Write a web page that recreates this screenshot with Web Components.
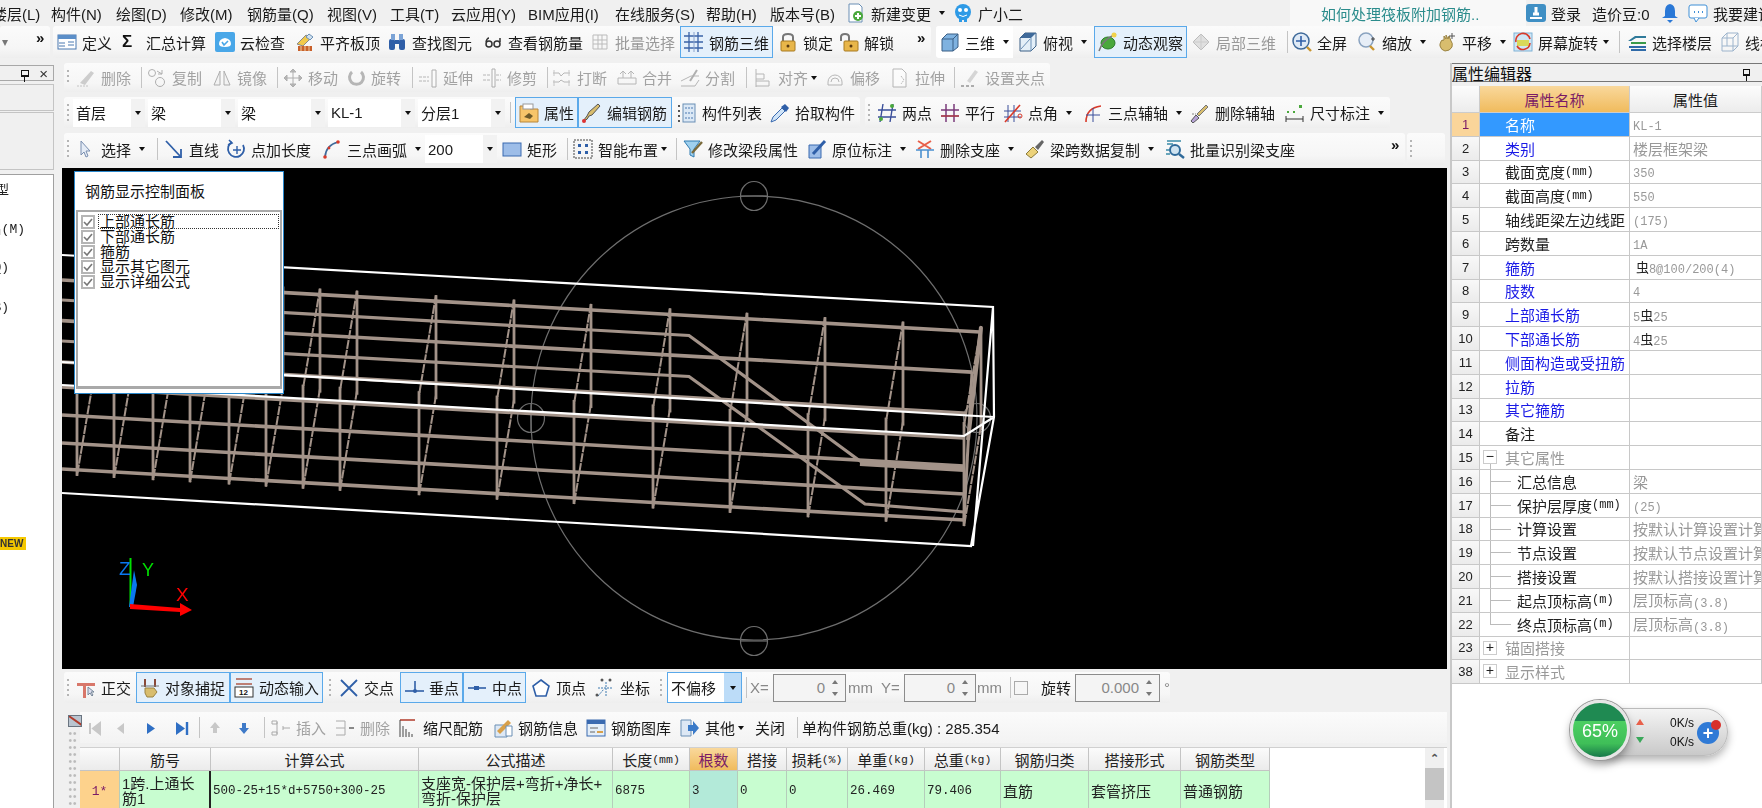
<!DOCTYPE html>
<html lang="zh">
<head>
<meta charset="utf-8">
<title>钢筋三维</title>
<style>
html,body{margin:0;height:100%;overflow:hidden;background:#f0f0f0}
body{font:15px "Liberation Sans","Noto Sans CJK SC",sans-serif;color:#1a1a1a}
small{font:12px "Liberation Mono","Noto Sans CJK SC",monospace;vertical-align:-1px}
b.sym{font:13px "Noto Sans CJK SC",sans-serif;color:#222}
</style>
</head>
<body>
<gl-app>
  <gl-bar slot="menu" flat>
    <g-tool w="59" style="margin-left:-8px">楼层(L)</g-tool><g-tool w="65">构件(N)</g-tool><g-tool w="64">绘图(D)</g-tool><g-tool w="67">修改(M)</g-tool><g-tool w="80">钢筋量(Q)</g-tool><g-tool w="63">视图(V)</g-tool><g-tool w="61">工具(T)</g-tool><g-tool w="77">云应用(Y)</g-tool><g-tool w="87">BIM应用(I)</g-tool><g-tool w="91">在线服务(S)</g-tool><g-tool w="64">帮助(H)</g-tool><g-tool w="76">版本号(B)</g-tool>
    <g-tool i="newdoc" w="107" caret>新建变更</g-tool><g-tool i="robot" w="337">广小二</g-tool>
    <g-tool w="236" pad="31" style="background:#f8f8f8;color:#2b8c8c">如何处理筏板附加钢筋..</g-tool>
    <g-tool i="login" w="66">登录</g-tool><g-tool w="68">造价豆:0</g-tool><g-tool i="bell" w="28"></g-tool><g-tool i="chat" w="80">我要建议</g-tool>
  </gl-bar>

  <gl-bar slot="main" flat>
    <gl-bar w="50"><g-glyph w="36">▾</g-glyph><g-more w="14"></g-more></gl-bar>
    <gl-bar w="878" pad="4" style="margin-left:3px">
      <g-tool i="define" w="64">定义</g-tool><g-tool i="sigma" w="94">汇总计算</g-tool><g-tool i="cloud" w="80">云检查</g-tool><g-tool i="flush" w="92">平齐板顶</g-tool><g-tool i="find" w="96">查找图元</g-tool><g-tool i="glasses" w="107">查看钢筋量</g-tool><g-tool i="batch" w="90" style="color:#999">批量选择</g-tool><g-tool i="bar3d" w="93" on>钢筋三维</g-tool><g-tool i="lock" w="61" style="margin-left:5px">锁定</g-tool><g-tool i="unlock" w="60">解锁</g-tool><g-more w="14" style="margin-left:auto"></g-more>
    </gl-bar>
    <gl-bar w="826" style="margin-left:5px">
      <g-tool i="cube" w="77" pad="4" caret style="background:#fff">三维</g-tool><g-tool i="top" w="81" pad="5" caret>俯视</g-tool><g-tool i="orbit" w="93" on>动态观察</g-tool><g-tool i="local" w="91" pad="0" style="color:#999;margin-left:4px">局部三维</g-tool><g-sep w="10"></g-sep>
      <g-tool i="full" w="65">全屏</g-tool><g-tool i="zoom" w="80" caret>缩放</g-tool><g-tool i="hand" w="76" caret>平移</g-tool><g-tool i="spin" w="99" caret="5">屏幕旋转</g-tool><g-sep w="15"></g-sep><g-tool i="floors" w="93">选择楼层</g-tool><g-tool i="wire" w="60">线框</g-tool>
    </gl-bar>
  </gl-bar>

  <gl-dock slot="left"></gl-dock>

  <gl-bar slot="center" w="986" h="29" style="margin-left:2px;color:#a2a2a2;--icon:grayscale(1) opacity(.45)">
    <g-grip w="12"></g-grip>
    <g-tool i="erase" w="60">删除</g-tool><g-sep w="11"></g-sep><g-tool i="copy" w="65">复制</g-tool><g-tool i="mirror" w="59">镜像</g-tool><g-sep w="12"></g-sep><g-tool i="move" w="63">移动</g-tool><g-tool i="rot" w="60">旋转</g-tool><g-sep w="12"></g-sep><g-tool i="extend" w="64">延伸</g-tool><g-tool i="trim" w="60">修剪</g-tool><g-sep w="10"></g-sep><g-tool i="brk" w="65">打断</g-tool><g-tool i="merge" w="63">合并</g-tool><g-tool i="split" w="60">分割</g-tool><g-sep w="13"></g-sep><g-tool i="align" w="72" caret="3">对齐</g-tool><g-tool i="offset" w="65">偏移</g-tool><g-tool i="stretch" w="58">拉伸</g-tool><g-sep w="12"></g-sep><g-tool i="gripset" w="90">设置夹点</g-tool>
  </gl-bar>

  <gl-row slot="center" gap="5" h="31" style="margin-top:5px;margin-left:2px">
    <gl-bar w="796" h="31">
      <g-grip w="9"></g-grip>
      <g-select w="72">首层</g-select><g-select w="87" style="margin-left:3px">梁</g-select><g-select w="87" style="margin-left:3px">梁</g-select><g-select w="87" style="margin-left:3px">KL-1</g-select><g-select w="87" style="margin-left:3px">分层1</g-select><g-sep w="10"></g-sep>
      <g-tool i="prop" w="63" on>属性</g-tool><g-tool i="pen" w="94" on>编辑钢筋</g-tool><g-tool i="list" w="98" pad="5">构件列表</g-tool><g-tool i="dropper" w="90">拾取构件</g-tool>
    </gl-bar>
    <gl-bar w="525" h="31">
      <g-grip w="12"></g-grip>
      <g-tool i="twopt" w="63">两点</g-tool><g-tool i="para" w="63">平行</g-tool><g-tool i="angle" w="80" caret>点角</g-tool><g-tool i="arc3" w="107" caret>三点辅轴</g-tool><g-tool i="delaux" w="95">删除辅轴</g-tool><g-tool i="dim" w="105" caret>尺寸标注</g-tool>
    </gl-bar>
  </gl-row>

  <gl-row slot="center" gap="2" h="32" style="margin-top:5px;margin-left:2px">
    <gl-bar w="1341" h="32">
      <g-grip w="12"></g-grip>
      <g-tool i="arrow" w="75" caret>选择</g-tool><g-sep w="13"></g-sep><g-tool i="line" w="62">直线</g-tool><g-tool i="ptlen" w="96">点加长度</g-tool><g-tool i="arc" w="103" caret>三点画弧</g-tool><g-select w="72">200</g-select><g-tool i="rect" w="65" pad="5">矩形</g-tool><g-sep w="11"></g-sep><g-tool i="smart" w="97" caret="3">智能布置</g-tool><g-sep w="13"></g-sep><g-tool i="funnel" w="124">修改梁段属性</g-tool><g-tool i="inplace" w="108" caret>原位标注</g-tool><g-tool i="delsup" w="110" caret>删除支座</g-tool><g-tool i="brush" w="140" caret>梁跨数据复制</g-tool><g-tool i="gear" w="150">批量识别梁支座</g-tool><g-more w="14" style="margin-left:auto"></g-more>
    </gl-bar>
    <gl-bar w="38" h="32"><g-grip w="12"></g-grip></gl-bar>
  </gl-row>

  <gl-canvas slot="center" style="margin-top:3px">
    <gl-panel>
      <g-check focus>上部通长筋</g-check><g-check>下部通长筋</g-check><g-check>箍筋</g-check><g-check>显示其它图元</g-check><g-check>显示详细公式</g-check>
    </gl-panel>
  </gl-canvas>

  <gl-bar slot="center" w="1106" h="31" style="margin-top:3px;margin-left:2px">
    <g-grip w="12"></g-grip>
    <g-tool i="ortho" w="60">正交</g-tool><g-tool i="magnet" w="94" on>对象捕捉</g-tool><g-tool i="input" w="93" on>动态输入</g-tool><g-grip w="16" style="padding-left:6px"></g-grip><g-tool i="cross" w="61">交点</g-tool><g-tool i="perp" w="63" on>垂点</g-tool><g-tool i="mid" w="63" on>中点</g-tool><g-tool i="vertex" w="69" pad="5">顶点</g-tool><g-tool i="coord" w="62">坐标</g-tool><g-grip w="10"></g-grip>
    <g-select w="75" hot>不偏移</g-select><g-sep w="8"></g-sep><g-tool w="23" style="color:#888">X=</g-tool><g-spin w="73">0</g-spin><g-tool w="35" pad="2" style="color:#888">mm</g-tool><g-tool w="23" style="color:#888">Y=</g-tool><g-spin w="72">0</g-spin><g-tool w="30" pad="1" style="color:#888">mm</g-tool><g-sep w="8"></g-sep><g-box></g-box><g-tool w="47" pad="13">旋转</g-tool><g-spin w="85">0.000</g-spin><g-tool w="10" pad="4" style="color:#888">°</g-tool>
  </gl-bar>

  <gl-rebar slot="center" style="margin-top:9px">
    <g-tool i="first" w="27"></g-tool><g-tool i="prev" w="30"></g-tool><g-tool i="next" w="31"></g-tool><g-tool i="last" w="22"></g-tool><g-sep w="11"></g-sep><g-tool i="up" w="29"></g-tool><g-tool i="down" w="24"></g-tool><g-sep w="13"></g-sep><g-tool i="insert" w="64" style="color:#a2a2a2">插入</g-tool><g-tool i="remove" w="63" style="color:#a2a2a2">删除</g-tool><g-tool i="scale" w="95">缩尺配筋</g-tool><g-tool i="info" w="93">钢筋信息</g-tool><g-tool i="lib" w="94">钢筋图库</g-tool><g-tool i="other" w="75" caret="3">其他</g-tool><g-tool w="37">关闭</g-tool><g-sep w="10"></g-sep><g-tool w="240">单构件钢筋总重(kg) : 285.354</g-tool>
  </gl-rebar>

  <gl-props slot="right">
    <g-row n="1" sel>名称<span slot="v"><small>KL-1</small></span></g-row>
    <g-row n="2" kind="link">类别<span slot="v">楼层框架梁</span></g-row>
    <g-row n="3">截面宽度<small>(mm)</small><span slot="v"><small>350</small></span></g-row>
    <g-row n="4">截面高度<small>(mm)</small><span slot="v"><small>550</small></span></g-row>
    <g-row n="5">轴线距梁左边线距<span slot="v"><small>(175)</small></span></g-row>
    <g-row n="6">跨数量<span slot="v"><small>1A</small></span></g-row>
    <g-row n="7" kind="link">箍筋<span slot="v"><b class="sym">&nbsp;虫</b><small>8@100/200(4)</small></span></g-row>
    <g-row n="8" kind="link">肢数<span slot="v"><small>4</small></span></g-row>
    <g-row n="9" kind="link">上部通长筋<span slot="v"><small>5</small><b class="sym">虫</b><small>25</small></span></g-row>
    <g-row n="10" kind="link">下部通长筋<span slot="v"><small>4</small><b class="sym">虫</b><small>25</small></span></g-row>
    <g-row n="11" kind="link">侧面构造或受扭筋</g-row>
    <g-row n="12" kind="link">拉筋</g-row>
    <g-row n="13" kind="link">其它箍筋</g-row>
    <g-row n="14">备注</g-row>
    <g-row n="15" kind="group" tree="minus">其它属性</g-row>
    <g-row n="16" tree="mid">汇总信息<span slot="v">梁</span></g-row>
    <g-row n="17" tree="mid">保护层厚度<small>(mm)</small><span slot="v"><small>(25)</small></span></g-row>
    <g-row n="18" tree="mid">计算设置<span slot="v">按默认计算设置计算</span></g-row>
    <g-row n="19" tree="mid">节点设置<span slot="v">按默认节点设置计算</span></g-row>
    <g-row n="20" tree="mid">搭接设置<span slot="v">按默认搭接设置计算</span></g-row>
    <g-row n="21" tree="mid">起点顶标高<small>(m)</small><span slot="v">层顶标高<small>(3.8)</small></span></g-row>
    <g-row n="22" tree="last">终点顶标高<small>(m)</small><span slot="v">层顶标高<small>(3.8)</small></span></g-row>
    <g-row n="23" kind="group" tree="plus">锚固搭接</g-row>
    <g-row n="38" kind="group" tree="plus">显示样式</g-row>
  </gl-props>

  <gl-speed slot="float"></gl-speed>
</gl-app>

<script>
// shared helper: one shadow root per element, styles inside
function mount(el, css, html) {
  el.attachShadow({ mode: "open" }).innerHTML = `<style>${css}</style>${html}`;
}

const ICONS = {
  newdoc: '<path d="M3 1h10l3 3v15H3z" fill="#fff" stroke="#6a8fb5"/><circle cx="12" cy="13" r="5" fill="#4aa83c"/><path d="M9 13h6M12 10v6" stroke="#fff" stroke-width="2"/>',
  robot: '<circle cx="10" cy="9" r="8" fill="#2e9ae6"/><circle cx="7" cy="7" r="2" fill="#fff"/><circle cx="13" cy="7" r="2" fill="#fff"/><path d="M6 12q4 3 8 0" stroke="#fff" fill="none"/><path d="M6 16v3h3v-2h2v2h3v-3z" fill="#2e9ae6"/>',
  login: '<rect x="0" y="1" width="20" height="18" rx="3" fill="#3f8fc4"/><path d="M7 11h6M10 4v7" stroke="#fff" stroke-width="3"/><path d="M4 15h12" stroke="#fff" stroke-width="2"/>',
  bell: '<path d="M10 1q5 1 5 7v5l3 2H2l3-2V8q0-6 5-7z" fill="#2a78d6"/><path d="M7 17h6l-3 3z" fill="#2a78d6"/>',
  chat: '<rect x="1" y="2" width="18" height="13" rx="2" fill="#fff" stroke="#3f8fd6"/><path d="M6 15l2 4 3-4" fill="#fff" stroke="#3f8fd6"/><path d="M6 9h1M10 9h1M14 9h1" stroke="#3f8fd6" stroke-width="2"/>',
  define: '<rect x="1" y="3" width="18" height="14" fill="#fff" stroke="#4a78b0"/><rect x="1" y="3" width="18" height="4" fill="#5b8ec8"/><path d="M2 11h6M2 14h6M11 10h6M11 13h6" stroke="#4a78b0"/>',
  sigma: '<text x="1" y="15" font-family="Liberation Sans" font-size="17" font-weight="700" fill="#111">Σ</text>',
  cloud: '<rect x="0" y="0" width="20" height="20" rx="2" fill="#49a7e8"/><path d="M4 12q0-5 6-6 6 1 6 6 0 3-6 3t-6-3z" fill="#fff"/><path d="M7 10l2 3 4-4" stroke="#49a7e8" stroke-width="1.6" fill="none"/>',
  flush: '<path d="M2 12l9-9 5 3-8 8z" fill="#f1c94a" stroke="#888"/><path d="M14 2l4 3-3 3-4-3z" fill="#cfe0ef" stroke="#6a8fb5"/><rect x="3" y="14" width="14" height="5" fill="#c8602a"/><path d="M6 14v5M10 14v5M14 14v5" stroke="#f0d0a0"/>',
  find: '<rect x="2" y="7" width="6" height="11" rx="2" fill="#2f5fa8"/><rect x="12" y="7" width="6" height="11" rx="2" fill="#2f5fa8"/><rect x="4" y="2" width="4" height="6" fill="#7ba3d6"/><rect x="12" y="2" width="4" height="6" fill="#7ba3d6"/><rect x="8" y="8" width="4" height="4" fill="#2f5fa8"/>',
  glasses: '<circle cx="6" cy="12" r="3" fill="none" stroke="#333" stroke-width="1.5"/><circle cx="14" cy="12" r="3" fill="none" stroke="#333" stroke-width="1.5"/><path d="M3 10q1-4 3-4M17 10V6" stroke="#333" stroke-width="1.5" fill="none"/>',
  batch: '<path d="M3 3h14v14H3zM3 8h14M3 12h14M8 3v14M12 3v14" stroke="#bbb" fill="none"/>',
  bar3d: '<path d="M0 4h19M0 10h19M0 16h19M5 0v20M14 0v20" stroke="#3a63a8" stroke-width="1.3" fill="none"/><path d="M10 0v20" stroke="#8aa3cc"/>',
  lock: '<path d="M5 9V5q0-3 5-3t5 3v4" stroke="#777" stroke-width="2" fill="none"/><rect x="3" y="9" width="14" height="10" rx="1" fill="#e8b64a" stroke="#a87a20"/><circle cx="10" cy="14" r="1.5" fill="#5a3a10"/>',
  unlock: '<path d="M2 9V5q0-3 4-3t4 3v4" stroke="#777" stroke-width="2" fill="none"/><rect x="5" y="9" width="14" height="10" rx="1" fill="#e8b64a" stroke="#a87a20"/><circle cx="12" cy="14" r="1.5" fill="#5a3a10"/>',
  cube: '<path d="M2 7l5-5h11v13l-5 4H2z" fill="#7fb2e0" stroke="#3a5f85"/><path d="M2 7h11v12M13 7l5-5" stroke="#3a5f85" fill="none"/>',
  top: '<path d="M2 6l5-5h11v13l-5 5H2z" fill="#e4eff8" stroke="#3a5f85"/><path d="M2 6l5-5h11l-5 5z" fill="#3f6a9a"/><path d="M13 6v13M3 17l9-10" stroke="#6a8fb5"/>',
  orbit: '<ellipse cx="10" cy="11" rx="7" ry="6" fill="#4aa83c" stroke="#2a7a2a"/><path d="M1 19Q4 8 18 2" stroke="#777" stroke-width="1.5" fill="none"/><circle cx="16" cy="3" r="2.5" fill="#f1d24a"/>',
  local: '<path d="M10 2l8 8-8 8-8-8z" fill="#e0e0e0" stroke="#bbb"/><path d="M2 10h16M10 2v16" stroke="#ccc"/>',
  full: '<circle cx="9" cy="9" r="8" fill="#dfeaf6" stroke="#3f6a9a" stroke-width="1.5"/><path d="M9 4v10M4 9h10" stroke="#2f5fa8" stroke-width="1.6"/><path d="M15 15l4 4" stroke="#c9952f" stroke-width="2.4"/>',
  zoom: '<circle cx="9" cy="8" r="7" fill="#e7eef7" stroke="#8aa3c0" stroke-width="1.5"/><path d="M13 14l4 4" stroke="#c9952f" stroke-width="2.4"/><path d="M16 5v4M14 7h4" stroke="#444"/>',
  hand: '<path d="M3 12q1-5 4-4V4l2 3V3l2 4 1-3 2 5q2 2 1 6-2 4-7 4-4-1-5-5z" fill="#d8bd6e" stroke="#9a8342"/><path d="M15 1v6M12 4h6" stroke="#555"/>',
  spin: '<rect x="1" y="1" width="18" height="18" fill="#cfe6f5" stroke="#7fb2d6"/><rect x="4" y="8" width="12" height="6" fill="#d9d85a"/><path d="M3 10A7 7 0 0 1 17 7M17 11A7 7 0 0 1 4 14" stroke="#d83a2a" stroke-width="1.6" fill="none"/>',
  floors: '<path d="M1 9l7-5h11v2H9l-5 3z" fill="#2f7a9a"/><path d="M4 10h15v2H4z" fill="#3a9a4a"/><path d="M2 14h17v2H2zM4 17h15v2H4z" fill="#2f6aa8"/>',
  wire: '<path d="M2 6l5-5h11v13l-5 5H2zM2 6h11v13M13 6l5-5M7 1v13H2M7 14h11" stroke="#9db4cc" fill="none"/>',
  erase: '<path d="M4 15L15 3l3 2-9 12z" fill="#999"/><path d="M1 18h12" stroke="#888" stroke-dasharray="2 1"/>',
  copy: '<circle cx="5" cy="5" r="3.5" fill="none" stroke="#555"/><circle cx="13" cy="14" r="4.5" fill="none" stroke="#555"/><path d="M10 3l5 3" stroke="#555"/><path d="M15 2v4h-4" stroke="#555" fill="none"/>',
  mirror: '<path d="M8 3L2 17h6zM12 3l6 14h-6z" fill="#eee" stroke="#555"/>',
  move: '<path d="M10 1v18M1 10h18M10 1l-3 3h6zM10 19l-3-3h6zM1 10l3-3v6zM19 10l-3-3v6z" stroke="#555" fill="#777"/>',
  rot: '<path d="M6 4a7 7 0 1 0 9 0" stroke="#666" stroke-width="3" fill="none"/>',
  extend: '<path d="M1 9h10M1 13h10" stroke="#666" stroke-dasharray="3 1"/><path d="M14 2h4v17h-4z" fill="#fff" stroke="#555"/>',
  trim: '<path d="M10 1h3v18h-3z" fill="#fff" stroke="#555"/><path d="M1 7h8M1 12h8M14 7h5M14 12h5" stroke="#666" stroke-dasharray="3 1"/>',
  brk: '<path d="M1 5h6l2 3 3-3h6M1 14h6l2-2 3 2h6" stroke="#666" fill="none"/><path d="M2 2v6M17 2v6M2 12v6M17 12v6" stroke="#888"/>',
  merge: '<path d="M1 10h18v6H1zM6 10V4M14 10V4M3 6l3-3 3 3M11 6l3-3 3 3" stroke="#666" fill="none"/>',
  split: '<path d="M1 13l10-5h8M1 18h14l4-6" stroke="#666" fill="none"/><path d="M10 13l7-11" stroke="#555" stroke-width="2"/>',
  align: '<path d="M3 1v18M3 6h8v5H3M3 13h13v5H3" stroke="#666" fill="none"/>',
  offset: '<path d="M3 14a7 7 0 1 1 14 0v3H3zM6 14a4 4 0 1 1 8 0" stroke="#666" fill="none"/>',
  stretch: '<path d="M3 1h9l4 4v14H3z" fill="#fff" stroke="#666"/><path d="M11 8l3 4-3 4" stroke="#666" stroke-dasharray="2 1" fill="none"/>',
  gripset: '<path d="M7 13L15 2l3 2-8 11z" fill="#aaa"/><path d="M1 18h3M6 18h3M11 18h3" stroke="#555" stroke-width="2"/>',
  prop: '<path d="M1 3h8l2 3h8v13H1z" fill="#f7c56a" stroke="#b8863a"/><rect x="4" y="1" width="10" height="5" fill="#fff" stroke="#999"/><path d="M5 14l5-4 4 3-3 3z" fill="#6d5a2a"/>',
  pen: '<path d="M1 18q5-1 6-5l3-1 8-9-2-2-9 8-2 4z" fill="#d8bd6e" stroke="#555"/><circle cx="2" cy="18" r="2" fill="#d33"/>',
  list: '<rect x="6" y="1" width="12" height="18" fill="#dbe8f5" stroke="#6a8fb5"/><path d="M8 5h8M8 10h8M8 15h8" stroke="#4a78b0" stroke-dasharray="2 1"/><path d="M1 3h2M1 8h2M1 13h2M1 18h2" stroke="#555" stroke-width="2"/>',
  dropper: '<path d="M1 19l2-5 9-9 3 3-9 9z" fill="#cfe3f7" stroke="#3a6ab0"/><path d="M11 4l4-3 4 4-3 4z" fill="#2f5fa8"/>',
  twopt: '<path d="M6 1L3 19M16 1l-3 18M1 7h18M1 14h18" stroke="#3a4f9a" stroke-width="1.4"/><circle cx="15" cy="3" r="2" fill="#4aa83c"/><circle cx="4" cy="16" r="2" fill="#4aa83c"/>',
  para: '<path d="M6 1v18M14 1v18M1 7h18M1 13h18" stroke="#7a3a7a" stroke-width="1.5"/><path d="M1 13h18" stroke="#c2392a"/>',
  angle: '<path d="M5 2v17M11 2v17M1 8h17M1 14h17" stroke="#3a4f9a"/><path d="M2 19L17 2" stroke="#d83a2a" stroke-width="1.6"/><circle cx="17" cy="13" r="2" fill="none" stroke="#d83a2a"/>',
  arc3: '<path d="M3 19Q3 5 18 3" stroke="#d83a2a" stroke-width="1.6" fill="none"/><path d="M10 5v14M3 12h14" stroke="#3a4f9a"/>',
  delaux: '<path d="M1 18l5-6 3 3-6 5z" fill="#b8a5d8" stroke="#555"/><path d="M7 11l9-9 2 2-9 9z" fill="#d8bd6e" stroke="#777"/><path d="M2 11h4" stroke="#888" stroke-dasharray="2 1"/>',
  dim: '<path d="M1 13v6M18 13v6M1 16h17" stroke="#333"/><rect x="14" y="2" width="3" height="3" fill="#4aa83c"/><rect x="2" y="8" width="2" height="2" fill="#4aa83c"/><rect x="8" y="8" width="2" height="2" fill="#4aa83c"/>',
  arrow: '<path d="M5 2v14l3-3 2 5 2-1-2-5h4z" fill="#e5ecf6" stroke="#7a8fb0"/>',
  line: '<path d="M2 2l14 15" stroke="#2f5fa8" stroke-width="1.8"/><path d="M17 10v8H9" stroke="#2f5fa8" stroke-width="1.8" fill="none"/>',
  ptlen: '<path d="M17 6a8 8 0 1 1-11-3" stroke="#2f5fa8" stroke-width="1.8" fill="none"/><path d="M3 1l3 3-4 2" stroke="#2f5fa8" fill="none" stroke-width="1.6"/><path d="M11 7v8M7 11h8" stroke="#2f5fa8" stroke-width="1.4"/>',
  arc: '<path d="M3 18Q4 6 16 3" stroke="#3f6a9a" stroke-width="1.8" fill="none"/><circle cx="3" cy="18" r="1.8" fill="#d83a2a"/><circle cx="16" cy="3" r="1.8" fill="#d83a2a"/><circle cx="7" cy="9" r="1.4" fill="#d83a2a"/>',
  rect: '<rect x="1" y="4" width="18" height="13" fill="#9dbde8" stroke="#3a6ab0"/>',
  smart: '<rect x="1" y="1" width="18" height="18" fill="#f6f6f6" stroke="#444" stroke-dasharray="2 1"/><path d="M5 5h3v3H5zM12 5h3v3h-3zM5 12h3v3H5zM12 12h3v3h-3z" fill="#2f5fa8"/>',
  funnel: '<path d="M1 2h16l-6 8v8l-4-2v-6z" fill="#9fd0ee" stroke="#2f7ab0"/><path d="M9 14L19 3" stroke="#7a6a3a" stroke-width="2.4"/>',
  inplace: '<path d="M2 6h12v13H2z" fill="#9dbde8" stroke="#3a6ab0"/><path d="M6 15L18 2" stroke="#2f5fa8" stroke-width="3"/>',
  delsup: '<path d="M3 2l13 8M16 2L3 10" stroke="#e8604a" stroke-width="2"/><path d="M1 11h18M6 11v8M13 11v8" stroke="#4a90d0" stroke-width="1.6"/>',
  brush: '<path d="M1 15l7-7 5 5-7 6z" fill="#ecd27a" stroke="#8a7a3a"/><path d="M10 8l7-7 2 2-6 8z" fill="#666"/>',
  gear: '<path d="M2 2h14M2 5h6" stroke="#3a8aa8" stroke-width="1.5"/><circle cx="10" cy="11" r="5" fill="#cfe3f0" stroke="#2f6a9a" stroke-width="2"/><path d="M14 15l5 4" stroke="#2f6a9a" stroke-width="2.4"/><path d="M1 11h3M1 15h4" stroke="#3a8aa8" stroke-width="1.5"/>',
  ortho: '<path d="M1 5h18v3H1zM7 8h3v12H7z" fill="#d8776a"/><path d="M12 9v8l2-2 2 3 1-1-2-3h3z" fill="#dde" stroke="#789"/>',
  magnet: '<path d="M5 1v8M15 1v8" stroke="#8a4a3a" stroke-width="2"/><path d="M1 8h18" stroke="#777"/><path d="M5 10h9l3 4-4 5H7l-2-4z" fill="#d8bd6e" stroke="#9a8342"/>',
  input: '<path d="M2 1h16M2 6h16" stroke="#b05a4a" stroke-width="1.4"/><rect x="1" y="9" width="18" height="10" fill="#fff" stroke="#333"/><text x="5" y="17" font-family="Liberation Sans" font-size="8" font-weight="700" fill="#111">12</text>',
  cross: '<path d="M2 2l16 16M18 2L2 18" stroke="#2f5fa8" stroke-width="1.8"/>',
  perp: '<path d="M1 13h19" stroke="#2f5fa8" stroke-width="1.6"/><path d="M11 3v10" stroke="#2f5fa8" stroke-width="1.6"/><circle cx="11" cy="13" r="2" fill="#2f5fa8"/>',
  mid: '<path d="M1 10h18" stroke="#2f5fa8" stroke-width="1.6"/><rect x="7" y="8" width="5" height="4" fill="#2f5fa8"/>',
  vertex: '<path d="M10 2l8 6-3 10H5L2 8z" fill="#fff" stroke="#2f5fa8" stroke-width="1.6"/>',
  coord: '<path d="M3 10h14M11 4v14M3 18l6-7" stroke="#3f7ab0" stroke-dasharray="2 1"/><circle cx="7" cy="2" r="1.5" fill="#555"/><circle cx="15" cy="2" r="1.5" fill="#555"/><circle cx="2" cy="17" r="1.5" fill="#555"/>',
  first: '<path d="M6 5v11M16 5l-7 5.5L16 16z" fill="#c8c8c8" stroke="#c8c8c8" stroke-width="2"/>',
  prev: '<path d="M13 5l-7 5.5L13 16z" fill="#c8c8c8"/>',
  next: '<path d="M6 5l8 5.5L6 16z" fill="#2f6fc4"/>',
  last: '<path d="M15 4v13" stroke="#2f6fc4" stroke-width="2.4"/><path d="M4 4l9 6.5L4 17z" fill="#2f6fc4"/>',
  up: '<path d="M10 4l5 6h-3v5H8v-5H5z" fill="#c8c8c8"/>',
  down: '<path d="M10 16l5-6h-3V5H8v5H5z" fill="#3f7ac8"/>',
  insert: '<path d="M1 3h5v3H1zM1 14h5v3H1zM6 4v12M12 10h7M12 8v4" stroke="#aaa" fill="none"/>',
  remove: '<path d="M1 3h9M1 17h9M1 10h9M10 3v14" stroke="#aaa" fill="none"/><path d="M14 10h5" stroke="#888" stroke-width="2"/>',
  scale: '<path d="M2 2h15" stroke="#b03a2a" stroke-width="1.5"/><path d="M2 2v17M5 8v11M8 11v8M11 14v5M14 16v3" stroke="#444"/>',
  info: '<path d="M2 7h12v12H2z" fill="#dde8f5" stroke="#6a8fb5"/><path d="M4 13L15 2l3 3-11 11z" fill="#d8a04a"/><path d="M13 8h6v10h-6z" fill="#fff" stroke="#6a8fb5"/>',
  lib: '<rect x="1" y="2" width="18" height="16" fill="#e4eef8" stroke="#3a6ab0"/><rect x="1" y="2" width="18" height="4" fill="#3a6ab0"/><path d="M4 10h8M4 14h5" stroke="#666"/><path d="M11 14h6" stroke="#d8a04a" stroke-width="2"/>',
  other: '<path d="M1 2h10v16H1z" fill="#dde8f5" stroke="#6a8fb5"/><path d="M8 7h5V3l6 7-6 7v-4H8z" fill="#3a7ac8"/>'
};

class GlApp extends HTMLElement {
  constructor() {
    super();
    mount(this, `
      :host{display:block;position:relative;width:1762px;height:808px;overflow:hidden;filter:blur(.35px)}
      .top{height:26px;overflow:hidden;display:flex}
      .main{height:32px;display:flex;overflow:hidden}
      .work{display:grid;grid-template-columns:62px 1385px 3px 312px;height:745px;margin-top:5px}
      .center{display:flex;flex-direction:column;min-width:0}
      .fill{grid-column:4}
    `, `
      <div class="top"><slot name="menu"></slot></div>
      <div class="main"><slot name="main"></slot></div>
      <div class="work">
        <div><slot name="left"></slot></div>
        <div class="center"><slot name="center"></slot></div>
        <div></div>
        <div class="fill"><slot name="right"></slot></div>
      </div>
      <slot name="float"></slot>
    `);
  }
}

// toolbar strip: flex row of tools with a soft light background
class GlBar extends HTMLElement {
  constructor() {
    super();
    const w = this.getAttribute("w");
    const h = this.getAttribute("h") || 32;
    const flat = this.hasAttribute("flat");
    mount(this, `
      :host{display:flex;align-items:center;flex:0 0 auto;height:${flat && !w ? "100%" : h + "px"};
        ${w ? `width:${w}px;` : "width:100%;"}
        padding-left:${this.getAttribute("pad") || 0}px;box-sizing:border-box;white-space:nowrap;overflow:hidden;
        ${flat ? "" : "background:linear-gradient(#fbfbfb,#f6f6f6 70%,#eeeeee);border-radius:3px;"}}
    `, `<slot></slot>`);
  }
}

class GlRow extends HTMLElement {
  constructor() {
    super();
    mount(this, `:host{display:flex;height:${this.getAttribute("h")}px;gap:${this.getAttribute("gap")}px}`, `<slot></slot>`);
  }
}

class GTool extends HTMLElement {
  constructor() {
    super();
    const icon = ICONS[this.getAttribute("i")];
    const on = this.hasAttribute("on");
    const pad = this.getAttribute("pad");
    const caret = this.getAttribute("caret");
    mount(this, `
      :host{display:flex;align-items:center;flex:0 0 ${this.getAttribute("w")}px;height:100%;box-sizing:border-box;
        padding-left:${pad !== null ? pad : on ? 3 : 0}px;white-space:nowrap;overflow:hidden;
        ${on ? "border:1px solid #5aa9ea;background:#e4f0fb;" : ""}}
      svg{width:20px;height:20px;flex:none;margin-right:5px;filter:var(--icon,none)}
      .c{width:0;height:0;border:3.5px solid transparent;border-top:4px solid #111;border-bottom:0;margin-left:${caret || 8}px;flex:none}
    `, `${icon ? `<svg viewBox="0 0 20 20">${icon}</svg>` : ""}<slot></slot>${caret !== null ? '<i class="c"></i>' : ""}`);
  }
}

class GSep extends HTMLElement {
  constructor() {
    super();
    mount(this, `:host{display:flex;justify-content:center;align-items:center;flex:0 0 ${this.getAttribute("w")}px;height:100%}
      i{width:1px;height:70%;background:#c4c4c4}`, `<i></i>`);
  }
}

class GGrip extends HTMLElement {
  constructor() {
    super();
    mount(this, `:host{display:block;flex:0 0 ${this.getAttribute("w")}px;height:100%;box-sizing:border-box;padding:7px 0 7px 3px}
      i{display:block;width:2px;height:100%;background:repeating-linear-gradient(#b5b5b5 0 2px,transparent 2px 5px)}`, `<i></i>`);
  }
}

class GMore extends HTMLElement {
  constructor() {
    super();
    mount(this, `:host{display:flex;flex:0 0 ${this.getAttribute("w")}px;align-items:flex-start;padding-top:3px;box-sizing:border-box;height:100%;
      font:700 15px "Liberation Sans",sans-serif;color:#111}`, `»`);
  }
}

class GGlyph extends HTMLElement {
  constructor() {
    super();
    mount(this, `:host{display:flex;flex:0 0 ${this.getAttribute("w")}px;justify-content:flex-start;padding-left:2px;box-sizing:border-box;font-size:12px;color:#777}`, `<slot></slot>`);
  }
}

class GSelect extends HTMLElement {
  constructor() {
    super();
    const hot = this.hasAttribute("hot");
    mount(this, `
      :host{display:flex;flex:0 0 ${this.getAttribute("w")}px;height:${hot ? 31 : 28}px;box-sizing:border-box;background:#fff;align-items:center;
        ${hot ? "border:1px solid #5aa9ea;" : ""}}
      span{flex:1;padding-left:3px;overflow:hidden;white-space:nowrap}
      b{display:flex;align-items:center;justify-content:center;width:${hot ? 17 : 14}px;height:100%;background:${hot ? "#bcdcf8" : "#f2f2f2"}}
      i{width:0;height:0;border:3.5px solid transparent;border-top:4px solid #111;border-bottom:0}
    `, `<span><slot></slot></span><b><i></i></b>`);
  }
}

class GSpin extends HTMLElement {
  constructor() {
    super();
    mount(this, `
      :host{display:flex;flex:0 0 ${this.getAttribute("w")}px;height:28px;box-sizing:border-box;border:1px solid #8c8c8c;background:#f4f4f4;align-items:center;color:#888}
      span{flex:1;text-align:right;padding-right:7px}
      b{display:flex;flex-direction:column;justify-content:space-between;height:16px;width:13px}
      i{width:0;height:0;border:3px solid transparent}
      i.u{border-bottom:4px solid #777;border-top:0} i.d{border-top:4px solid #777;border-bottom:0}
    `, `<span><slot></slot></span><b><i class="u"></i><i class="d"></i></b>`);
  }
}

class GBox extends HTMLElement {
  constructor() {
    super();
    mount(this, `:host{display:block;flex:0 0 14px;height:14px;box-sizing:border-box;border:1px solid #aaa;background:#f6f6f6}`, ``);
  }
}

class GlDock extends HTMLElement {
  constructor() {
    super();
    mount(this, `
      :host{display:flex;flex-direction:column;height:745px;box-sizing:border-box;padding:2px 8px 0 0;font:12px "Liberation Mono","Noto Sans CJK SC",monospace;color:#222}
      div{box-sizing:border-box}
      .head{height:16px;display:flex;align-items:center;justify-content:flex-end;gap:10px;border:1px solid #a8a8a8;border-left:0;padding-right:5px;flex:none;background:#f0f0f0}
      .r{height:27px;margin-top:3px;border:1px solid #c4c4c4;border-left:0;flex:none}
      .r.b{height:58px;margin-top:1px}
      .list{flex:1;background:#fff;border:1px solid #a0a0a0;border-left:0;margin-top:4px;overflow:hidden;display:flex;flex-direction:column;border-bottom:0}
      .l{height:40px;display:flex;justify-content:flex-end;align-items:center;white-space:nowrap;flex:none;font-size:13px}
      .new{margin:210px 0 0;width:26px;height:13px;background:#f5c800;font:700 10px "Liberation Sans",sans-serif;line-height:13px;color:#333;flex:none}
      .p{width:8px;height:7px;border:1px solid #111;border-bottom:2px solid #111;position:relative;box-sizing:border-box}
      .p::after{content:"";position:absolute;left:2px;top:6px;width:1px;height:5px;background:#111}
      .x{font:15px "Liberation Sans",sans-serif;color:#333}
    `, `
      <div class="head"><i class="p"></i><span class="x">×</span></div>
      <div class="r"></div><div class="r b"></div>
      <div class="list">
        <div class="l" style="width:9px;height:26px">型</div>
        <div class="l" style="width:25px;margin-top:6px">出(M)</div>
        <div class="l" style="width:9px">(Q)</div>
        <div class="l" style="width:9px">(B)</div>
        <div class="new">NEW</div>
      </div>
    `);
  }
}

// black 3D view: wireframe of the beam, over it the floating control panel
class GlCanvas extends HTMLElement {
  constructor() {
    super();
    const slope = 0.0566;
    const line = (x1, y1, x2, y2, w, c, extra = "") =>
      `<path d="M${x1} ${y1}L${x2} ${y2}" stroke="${c}" stroke-width="${w}" fill="none" ${extra}/>`;
    const rebar = "#a39389";
    let s = "";
    // circle handles first, thin grey
    s += `<ellipse cx="754" cy="418" rx="223" ry="222" fill="none" stroke="#6e6e6e" stroke-width="1.2"/>`;
    [[754, 196], [754, 641], [531, 418], [977, 418]].forEach(([x, y]) => {
      s += `<ellipse cx="${x}" cy="${y}" rx="13.5" ry="14.5" fill="none" stroke="#6e6e6e" stroke-width="1.2"/>`;
    });
    s += line(740, 196, 768, 196, 1.2, "#6e6e6e") + line(740, 641, 768, 641, 1.2, "#6e6e6e") + line(531, 404, 531, 432, 1.2, "#6e6e6e");
    // stirrups: narrow box seen almost edge on
    [77, 114, 153, 190, 229, 266, 303, 340, 419, 497, 574, 653, 730, 808, 886, 964].forEach((b) => {
      const t = b + 17;
      const yT = 274 + slope * (t - 62);
      const yB = 475 + slope * (b - 62);
      const m = (yT + yB) / 2;
      s += line(t, yT, t, m + 4, 2.8, rebar) + line(b, m - 4, b, yB, 2.8, rebar);
      s += line(t, yT, b, m, 2, rebar, 'stroke-dasharray="9 1"') + line(t, m, b, yB, 2, rebar, 'stroke-dasharray="9 1"');
    });
    // longitudinal bars
    const bars = [[280, 980], [320.6, 972], [362, 967], [387, 964], [415, 964], [443, 964], [469, 964]];
    bars.forEach(([y, end]) => {
      s += line(62, y, end, y + slope * (end - 62), 3.6, rebar);
    });
    s += `<path d="M62 300L689 335.5L860 461L964 467" stroke="${rebar}" stroke-width="3.2" fill="none"/>`;
    s += `<path d="M62 341L689 376.5L865 504L964 512" stroke="${rebar}" stroke-width="3.2" fill="none"/>`;
    s += line(860, 463, 964, 469, 6, rebar);
    s += line(981, 327, 968, 440, 4, rebar) + line(972, 372, 964, 520, 3, rebar);
    // outline of the beam
    s += `<path d="M62 255L993 307L994 417L971 546L62 493M993 307L973 546M62 362L994 417M62 385L964 436L994 417" stroke="#fff" stroke-width="2.2" fill="none"/>`;
    // axis
    s += line(130.5, 607, 130.5, 558, 2, "#00e000");
    s += `<path d="M129 607L134 570L137 585L133 607z" fill="#0a78f0"/>`;
    s += `<path d="M130 604L180 608V603L192 610L180 616V612L130 609z" fill="#f00"/>`;
    s += `<text x="119" y="575" font-family="Liberation Sans" font-size="19" fill="#0a78f0">Z</text>`;
    s += `<text x="142" y="576" font-family="Liberation Sans" font-size="18" fill="#00e000">Y</text>`;
    s += `<text x="176" y="601" font-family="Liberation Sans" font-size="19" fill="#f00">X</text>`;
    mount(this, `
      :host{display:block;position:relative;flex:none;width:1385px;height:501px;background:#000;overflow:hidden}
      svg{display:block}
    `, `<svg width="1385" height="501" viewBox="62 168 1385 501">${s}</svg><slot></slot>`);
  }
}

class GlPanel extends HTMLElement {
  constructor() {
    super();
    mount(this, `
      :host{position:absolute;left:12px;top:3px;width:210px;height:223px;box-sizing:border-box;background:#fff;border:1.5px solid #2a88cc;padding-top:10px;color:#111}
      .t{height:28px;padding-left:10px;line-height:20px}
      .l{height:179px;margin:0 1px;border:2px solid #a9a9a9;border-bottom-width:3px;padding:2px 0 0 3px;box-sizing:border-box;background:#fff;display:flex;flex-direction:column}
    `, `<div class="t">钢筋显示控制面板</div><div class="l"><slot></slot></div>`);
  }
}

class GCheck extends HTMLElement {
  constructor() {
    super();
    mount(this, `
      :host{display:flex;align-items:center;height:15px;flex:none;position:relative}
      i{width:14px;height:14px;box-sizing:border-box;border:2px solid #b5b5b5;display:flex;flex:none;margin-right:4px}
      svg{width:10px;height:10px}
      span{line-height:15px;white-space:nowrap;padding-left:1px}
      .f{position:absolute;left:17px;right:1px;top:0;bottom:0;border:1px dotted #333}
    `, `<i><svg viewBox="0 0 10 10"><path d="M1 5l3 3 5-6" stroke="#777" stroke-width="1.6" fill="none"/></svg></i><span><slot></slot></span>${this.hasAttribute("focus") ? '<div class="f"></div>' : ""}`);
  }
}

// bottom bar grid under the canvas
class GlRebar extends HTMLElement {
  constructor() {
    super();
    const cols = [
      ["", 40], ["筋号", 91], ["计算公式", 208], ["公式描述", 194], ["长度<small>(mm)</small>", 77], ["根数", 48], ["搭接", 49],
      ["损耗<small>(%)</small>", 61], ["单重<small>(kg)</small>", 77], ["总重<small>(kg)</small>", 76], ["钢筋归类", 88], ["搭接形式", 92], ["钢筋类型", 89]
    ];
    const cells = ["1*", "1跨.上通长筋1", "500-25+15*d+5750+300-25", "支座宽-保护层+弯折+净长+<br>弯折-保护层", "6875", "3", "0", "0", "26.469", "79.406", "直筋", "套管挤压", "普通钢筋"];
    const mono = new Set([2, 4, 5, 6, 7, 8, 9]);
    const head = cols.map(([t], i) => `<div class="h ${i === 5 ? "act" : ""}">${t}</div>`).join("");
    const row = cells.map((t, i) => `<div class="c ${mono.has(i) ? "m" : ""} ${i === 0 ? "n" : ""} ${i === 5 ? "cur" : ""}"><span>${t}</span></div>`).join("");
    mount(this, `
      :host{display:grid;grid-template-columns:18px 1fr;height:98px;flex:none;overflow:hidden}
      .side{display:flex;flex-direction:column;padding:3px 0 0 6px}
      .x{width:12px;height:10px;background:#b9c4cf;border:1px solid #6a7480;position:relative;overflow:hidden;flex:none}
      .x::after{content:"";position:absolute;left:-2px;top:4px;width:18px;height:1.5px;background:#b03a2a;transform:rotate(35deg)}
      .dots{flex:1;margin-top:3px;width:9px;background:radial-gradient(#bbb 1px,transparent 1.2px) 0 0/4.5px 7px}
      .tb{height:31px;display:flex;align-items:center;background:linear-gradient(#fbfbfb,#f3f3f3);overflow:hidden;white-space:nowrap;padding-left:4px}
      .wrap{display:flex;margin-top:4px;background:#fff;border-top:1px solid #d0d0d0;height:63px;overflow:hidden;position:relative}
      .g{display:grid;grid-template-columns:${cols.map((c) => c[1] + "px").join(" ")};grid-template-rows:23px 40px;width:1345px;flex:none;align-content:start}
      .h{display:flex;align-items:center;justify-content:center;white-space:nowrap;background:linear-gradient(#fbfbfb,#ebebeb);border-right:1px solid #c4c4c4;border-bottom:1px solid #c4c4c4;box-sizing:border-box;color:#222}
      .act{background:linear-gradient(#f9d89c,#f0bb5d);color:#7a1a66}
      .c{display:flex;align-items:center;background:#c8fdd0;border-right:1px solid #b5cdbb;box-sizing:border-box;padding:0 2px;line-height:15px;color:#222;overflow:hidden;white-space:normal}
      .m{font:12.5px "Liberation Mono",monospace}
      .n{background:#fdd28c;color:#7a1a66;justify-content:center;font:13px "Liberation Mono",monospace}
      .cur{background:#b3ead9}
      .c:nth-of-type(15){border-right:2px solid #222}
      .sc{position:absolute;left:1345px;top:0;width:19px;height:63px;background:#f0f0f0;display:flex;flex-direction:column;align-items:center}
      .sc i{font:700 11px "Liberation Sans",sans-serif;height:20px;line-height:20px;color:#555;font-style:normal}
      .sc b{display:block;width:100%;height:32px;background:#c4c4c4}
      small{font:11.5px "Liberation Mono",monospace}
    `, `
      <div class="side"><div class="x"></div><div class="dots"></div></div>
      <div>
        <div class="tb"><slot></slot></div>
        <div class="wrap"><div class="g">${head}${row}</div><div class="sc"><i>⌃</i><b></b></div></div>
      </div>
    `);
  }
}

class GlProps extends HTMLElement {
  constructor() {
    super();
    mount(this, `
      :host{display:block;height:745px;background:#fff;border-left:2px solid #c8c8c8;box-sizing:border-box;overflow:hidden;margin-left:0}
      .bar{height:19px;background:#f0f0f0;border-top:1px solid #777;border-bottom:1px solid #777;display:flex;align-items:center;justify-content:space-between;font-size:16px;color:#111;padding:0 0 0 0;box-sizing:border-box;white-space:nowrap}
      .p{width:7px;height:7px;border:1px solid #111;border-bottom:2px solid #111;margin-right:12px;position:relative;box-sizing:border-box}
      .p::after{content:"";position:absolute;left:2px;top:6px;width:1px;height:5px;background:#111}
      .gap{height:4px;background:#f0f0f0}
      .head{display:grid;grid-template-columns:28px 150px 1fr;height:27px}
      .head div{display:flex;align-items:center;justify-content:center;border-right:1px solid #ccc;border-bottom:1px solid #ccc;background:linear-gradient(#fcfcfc,#ececec);box-sizing:border-box}
      .head .a{background:linear-gradient(#f9d89c,#f0bb5d);color:#7a1a66}
    `, `
      <div class="bar"><span>属性编辑器</span><i class="p"></i></div><div class="gap"></div>
      <div class="head"><div></div><div class="a">属性名称</div><div>属性值</div></div>
      <slot></slot>
    `);
  }
}

class GRow extends HTMLElement {
  constructor() {
    super();
    const sel = this.hasAttribute("sel");
    const kind = this.getAttribute("kind");
    const tree = this.getAttribute("tree");
    const color = sel ? "#fff" : kind === "link" ? "#1a1ae6" : kind === "group" ? "#999" : "#222";
    const box = tree === "minus" || tree === "plus";
    const branch = tree === "mid" || tree === "last";
    mount(this, `
      :host{display:grid;grid-template-columns:28px 150px 1fr;height:23.8px;box-sizing:border-box}
      div{display:flex;align-items:center;white-space:nowrap;overflow:hidden;border-right:1px solid #c8c8c8;border-bottom:1px solid #c8c8c8;box-sizing:border-box;position:relative}
      .n{justify-content:center;font:13px "Liberation Sans",sans-serif;background:${sel ? "#fad59a" : "linear-gradient(#f8f8f8,#ebebeb)"};color:${sel ? "#7a1a66" : "#222"}}
      .k{padding-left:${branch ? 37 : 25}px;color:${color};${sel ? "background:#3399ff;" : ""}}
      .v{padding-left:3px;color:#999;font-size:15px}
      .box{position:absolute;left:3px;top:4px;width:14px;height:14px;box-sizing:border-box;border:1px solid #ccc;display:flex;align-items:center;justify-content:center;font:14px "Liberation Mono",monospace;color:#222;overflow:visible}
      .tv{position:absolute;left:10px;top:${tree === "minus" ? "18px" : "0"};width:1px;height:${tree === "last" ? "12px" : tree === "minus" ? "6px" : "100%"};background:#bbb}
      .th{position:absolute;left:10px;top:11px;width:21px;height:1px;background:#bbb}
    `, `
      <div class="n">${this.getAttribute("n")}</div>
      <div class="k">${box ? `<span class="box">${tree === "minus" ? "−" : "+"}</span>` : ""}${tree === "minus" || branch ? '<i class="tv"></i>' : ""}${branch ? '<i class="th"></i>' : ""}<slot></slot></div>
      <div class="v"><slot name="v"></slot></div>
    `);
  }
}

// floating speed ball over the property panel
class GlSpeed extends HTMLElement {
  constructor() {
    super();
    mount(this, `
      :host{position:absolute;left:1570px;top:700px;width:162px;height:64px;font:12px "Liberation Sans",sans-serif;color:#111}
      .pill{position:absolute;left:20px;top:8px;width:138px;height:48px;border-radius:24px;background:linear-gradient(#f4f4f4,#c9c9c9);box-shadow:0 4px 8px rgba(0,0,0,.3);border:1px solid #bbb;box-sizing:border-box}
      .ball{position:absolute;left:0;top:0;width:60px;height:60px;border-radius:50%;background:linear-gradient(#1f8a52 0,#1f8a52 33%,#4ccf62 33%,#3fbf58 75%,#17784a);border:3px solid #e6e6e6;box-shadow:0 0 0 1px #999,0 5px 9px rgba(0,0,0,.35);box-sizing:border-box;color:#fff;font-size:18px;display:flex;align-items:center;justify-content:center;padding-top:2px}
      .a{position:absolute;left:66px;width:0;height:0;border:4px solid transparent}
      .up{top:19px;border-bottom:6px solid #e8604a;border-top:0}
      .dn{top:37px;border-top:6px solid #3aa85a;border-bottom:0}
      .t{position:absolute;left:100px}
      .plus{position:absolute;left:127px;top:22px;width:22px;height:22px;border-radius:50%;background:#2f7ad6;color:#fff;font:700 18px/22px "Liberation Sans",sans-serif;text-align:center}
      .dot{position:absolute;left:141px;top:20px;width:10px;height:10px;border-radius:50%;background:#d8302a}
    `, `
      <div class="pill"></div><div class="ball">65%</div>
      <i class="a up"></i><i class="a dn"></i>
      <span class="t" style="top:16px">0K/s</span><span class="t" style="top:35px">0K/s</span>
      <div class="plus">+</div><div class="dot"></div>
    `);
  }
}

customElements.define("gl-app", GlApp);
customElements.define("gl-bar", GlBar);
customElements.define("gl-row", GlRow);
customElements.define("g-tool", GTool);
customElements.define("g-sep", GSep);
customElements.define("g-grip", GGrip);
customElements.define("g-more", GMore);
customElements.define("g-glyph", GGlyph);
customElements.define("g-select", GSelect);
customElements.define("g-spin", GSpin);
customElements.define("g-box", GBox);
customElements.define("gl-dock", GlDock);
customElements.define("gl-canvas", GlCanvas);
customElements.define("gl-panel", GlPanel);
customElements.define("g-check", GCheck);
customElements.define("gl-rebar", GlRebar);
customElements.define("gl-props", GlProps);
customElements.define("g-row", GRow);
customElements.define("gl-speed", GlSpeed);
</script>
</body>
</html>
